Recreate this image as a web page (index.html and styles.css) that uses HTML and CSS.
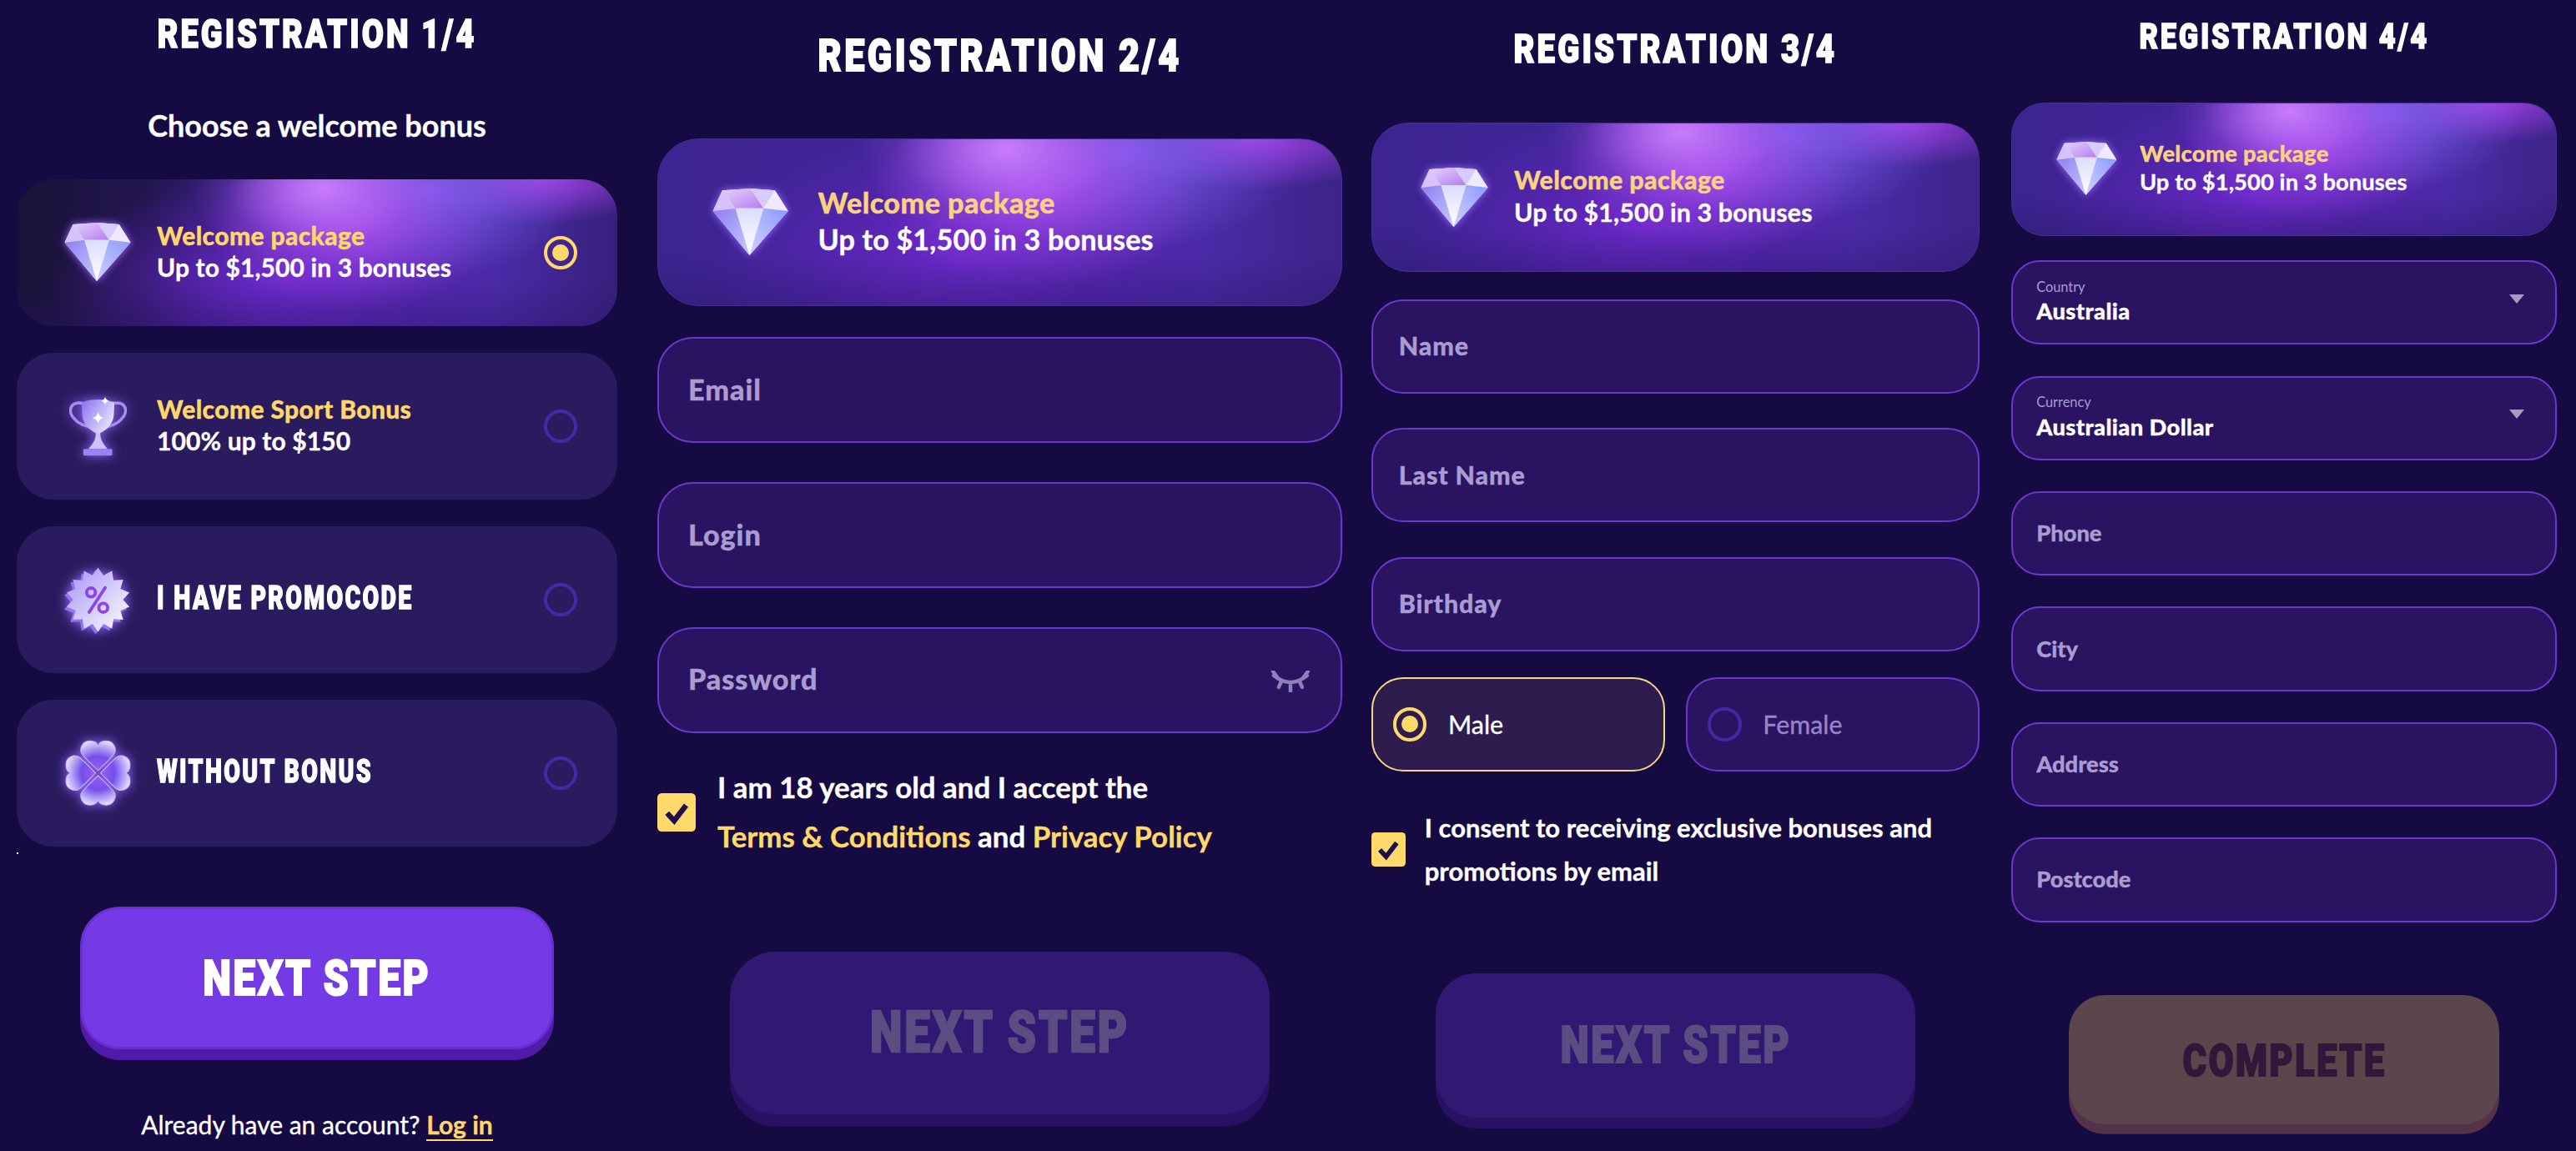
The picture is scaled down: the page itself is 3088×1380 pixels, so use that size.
FILE: index.html
```html
<!DOCTYPE html>
<html lang="en">
<head>
<meta charset="utf-8">
<title>Registration</title>
<link rel="stylesheet" href="styles.css">
</head>
<body>
<svg class="defs" width="0" height="0" aria-hidden="true">
  <defs>
    <linearGradient id="gLeft" x1="0" y1="0" x2="1" y2="1"><stop offset="0" stop-color="#8f7cf0"/><stop offset="1" stop-color="#c3cbff"/></linearGradient>
    <linearGradient id="gMid" x1="0" y1="0" x2="0" y2="1"><stop offset="0" stop-color="#dcdcff"/><stop offset="1" stop-color="#ffffff"/></linearGradient>
    <linearGradient id="gRight" x1="1" y1="0" x2="0" y2="1"><stop offset="0" stop-color="#8d98ff"/><stop offset="1" stop-color="#cfd2ff"/></linearGradient>
    <linearGradient id="gCrown" x1="0" y1="0" x2="1" y2="1"><stop offset="0" stop-color="#e4d4ff"/><stop offset="1" stop-color="#b67cf0"/></linearGradient>
    <linearGradient id="gCup" x1="0" y1="0" x2="1" y2="0.6"><stop offset="0" stop-color="#8a6eee"/><stop offset="1" stop-color="#e6e4ff"/></linearGradient>
    <linearGradient id="gBadge" x1="0" y1="0" x2="1" y2="1"><stop offset="0" stop-color="#a690f6"/><stop offset="0.55" stop-color="#d6d0fb"/><stop offset="1" stop-color="#ffffff"/></linearGradient>
    <radialGradient id="gLeaf" gradientUnits="userSpaceOnUse" cx="0" cy="0" r="40"><stop offset="0" stop-color="#a45ef0"/><stop offset="0.5" stop-color="#7450ec"/><stop offset="1" stop-color="#ece8ff"/></radialGradient>
    <path id="leaf" d="M0-3-18-21C-24-28-18-38-10-38-5-38-1-36 0-32 1-36 5-38 10-38 18-38 24-28 18-21Z"/>
  </defs>
</svg>

<main class="board">
  <span class="speck"></span>

  <section class="panel panel-one">
    <h1 class="title"><span class="squeeze">REGISTRATION 1/4</span></h1>
    <p class="lead">Choose a welcome bonus</p>
    <div class="card card-active">
      <span class="slot"><svg class="gem" viewBox="0 0 80 72"><polygon points="10,2 40,0 66,2 80,24 39,71 0,24" fill="#f0ecff"/><polygon points="10,2 24,21 0,24" fill="#d7c2fb"/><polygon points="10,2 40,0 54,21 24,21" fill="url(#gCrown)"/><polygon points="40,0 66,2 54,21" fill="#d6ccff"/><polygon points="66,2 80,24 54,21" fill="#efeaff"/><polygon points="0,24 24,21 39,71" fill="url(#gLeft)"/><polygon points="24,21 54,21 39,71" fill="url(#gMid)"/><polygon points="54,21 80,24 39,71" fill="url(#gRight)"/></svg></span>
      <div class="copy"><div class="gold">Welcome package</div><div class="white">Up to $1,500 in 3 bonuses</div></div>
      <span class="radio radio-on"></span>
    </div>
    <div class="card">
      <span class="slot"><svg class="cup" viewBox="95 100 210 225"><path d="M148 130C95 118 88 162 115 187 130 205 150 210 172 216M252 130C305 118 312 162 285 187 270 205 250 210 228 216" fill="none" stroke="#a68cf6" stroke-width="11"/><path d="M192 236C192 268 176 282 165 296H235C224 282 208 268 208 236Z" fill="#c9c2fb"/><rect x="146" y="296" width="106" height="24" rx="4" fill="#9a84f2"/><path d="M140 125Q200 105 260 125L258 170C255 210 225 232 200 241 175 232 145 210 142 170Z" fill="url(#gCup)"/><path d="M200 160Q203 178 220 182 203 186 200 204 197 186 180 182 197 178 200 160Z" fill="#fff"/><path d="M226 104Q228 117 240 120 228 123 226 136 224 123 212 120 224 117 226 104Z" fill="#fff"/></svg></span>
      <div class="copy"><div class="gold">Welcome Sport Bonus</div><div class="white">100% up to $150</div></div>
      <span class="radio"></span>
    </div>
    <div class="card">
      <span class="slot"><svg class="badge" viewBox="-42 -42 84 84"><polygon transform="translate(-3 3)" fill="#8f74ee" points="0,-40 6.9,-30.2 17.4,-36 19.3,-24.2 31.3,-24.9 27.9,-13.5 39,-8.9 31,0 39,8.9 27.9,13.5 31.3,24.9 19.3,24.2 17.4,36 6.9,30.2 0,40 -6.9,30.2 -17.4,36 -19.3,24.2 -31.3,24.9 -27.9,13.5 -39,8.9 -31,0 -39,-8.9 -27.9,-13.5 -31.3,-24.9 -19.3,-24.2 -17.4,-36 -6.9,-30.2"/><polygon fill="url(#gBadge)" points="0,-40 6.9,-30.2 17.4,-36 19.3,-24.2 31.3,-24.9 27.9,-13.5 39,-8.9 31,0 39,8.9 27.9,13.5 31.3,24.9 19.3,24.2 17.4,36 6.9,30.2 0,40 -6.9,30.2 -17.4,36 -19.3,24.2 -31.3,24.9 -27.9,13.5 -39,8.9 -31,0 -39,-8.9 -27.9,-13.5 -31.3,-24.9 -19.3,-24.2 -17.4,-36 -6.9,-30.2"/><g fill="none" stroke="#8b45e8" stroke-width="4"><circle cx="-8.7" cy="-9" r="5.5"/><circle cx="6.5" cy="10" r="5.5"/><path d="M9-15-11 15.5" stroke-linecap="round"/></g></svg></span>
      <div class="copy"><div class="heavy-label"><span class="squeeze-label">I HAVE PROMOCODE</span></div></div>
      <span class="radio"></span>
    </div>
    <div class="card">
      <span class="slot"><svg class="clover" viewBox="-40 -40 80 80"><g fill="url(#gLeaf)" stroke="#c9b6fb" stroke-width="1"><use href="#leaf"/><use href="#leaf" transform="rotate(90)"/><use href="#leaf" transform="rotate(180)"/><use href="#leaf" transform="rotate(270)"/></g></svg></span>
      <div class="copy"><div class="heavy-label"><span class="squeeze-label">WITHOUT BONUS</span></div></div>
      <span class="radio"></span>
    </div>
    <button class="step step-live"><span class="squeeze-step">NEXT STEP</span></button>
    <p class="signin">Already have an account? <a class="signin-link">Log in</a></p>
  </section>

  <section class="panel panel-two">
    <h1 class="title"><span class="squeeze">REGISTRATION 2/4</span></h1>
    <div class="banner">
      <span class="slot"><svg class="gem" viewBox="0 0 80 72"><polygon points="10,2 40,0 66,2 80,24 39,71 0,24" fill="#f0ecff"/><polygon points="10,2 24,21 0,24" fill="#d7c2fb"/><polygon points="10,2 40,0 54,21 24,21" fill="url(#gCrown)"/><polygon points="40,0 66,2 54,21" fill="#d6ccff"/><polygon points="66,2 80,24 54,21" fill="#efeaff"/><polygon points="0,24 24,21 39,71" fill="url(#gLeft)"/><polygon points="24,21 54,21 39,71" fill="url(#gMid)"/><polygon points="54,21 80,24 39,71" fill="url(#gRight)"/></svg></span>
      <div class="copy"><div class="gold gold-soft">Welcome package</div><div class="white">Up to $1,500 in 3 bonuses</div></div>
    </div>
    <div class="field">Email</div>
    <div class="field">Login</div>
    <div class="field field-eye">Password
      <svg class="eye" viewBox="0 0 48 26"><path d="M4 6Q24 22 44 6M3 1 9 9M45 1 39 9M13 13 10 20M35 13 38 20M24 16V25" fill="none" stroke="#8d7fbb" stroke-width="4.5" stroke-linecap="round"/></svg>
    </div>
    <div class="consent">
      <span class="tick"><svg class="tick-mark" viewBox="0 0 24 24"><path d="M4 12.5 10 19 20 6" fill="none" stroke="#1e0f4a" stroke-width="4.5"/></svg></span>
      <p class="consent-text">I am 18 years old and I accept the<br><a class="link">Terms &amp; Conditions</a> and <a class="link">Privacy Policy</a></p>
    </div>
    <button class="step step-off step-consent"><span class="squeeze-step">NEXT STEP</span></button>
  </section>

  <section class="panel panel-three">
    <h1 class="title"><span class="squeeze">REGISTRATION 3/4</span></h1>
    <div class="banner">
      <span class="slot"><svg class="gem" viewBox="0 0 80 72"><polygon points="10,2 40,0 66,2 80,24 39,71 0,24" fill="#f0ecff"/><polygon points="10,2 24,21 0,24" fill="#d7c2fb"/><polygon points="10,2 40,0 54,21 24,21" fill="url(#gCrown)"/><polygon points="40,0 66,2 54,21" fill="#d6ccff"/><polygon points="66,2 80,24 54,21" fill="#efeaff"/><polygon points="0,24 24,21 39,71" fill="url(#gLeft)"/><polygon points="24,21 54,21 39,71" fill="url(#gMid)"/><polygon points="54,21 80,24 39,71" fill="url(#gRight)"/></svg></span>
      <div class="copy"><div class="gold gold-soft">Welcome package</div><div class="white">Up to $1,500 in 3 bonuses</div></div>
    </div>
    <div class="field">Name</div>
    <div class="field">Last Name</div>
    <div class="field">Birthday</div>
    <div class="gender">
      <div class="choice choice-on"><span class="radio radio-on"></span><span>Male</span></div>
      <div class="choice"><span class="radio"></span><span>Female</span></div>
    </div>
    <div class="consent consent-tight">
      <span class="tick"><svg class="tick-mark" viewBox="0 0 24 24"><path d="M4 12.5 10 19 20 6" fill="none" stroke="#1e0f4a" stroke-width="4.5"/></svg></span>
      <p class="consent-text">I consent to receiving exclusive bonuses and<br>promotions by email</p>
    </div>
    <button class="step step-off step-consent"><span class="squeeze-step">NEXT STEP</span></button>
  </section>

  <section class="panel panel-four">
    <h1 class="title"><span class="squeeze">REGISTRATION 4/4</span></h1>
    <div class="banner">
      <span class="slot"><svg class="gem" viewBox="0 0 80 72"><polygon points="10,2 40,0 66,2 80,24 39,71 0,24" fill="#f0ecff"/><polygon points="10,2 24,21 0,24" fill="#d7c2fb"/><polygon points="10,2 40,0 54,21 24,21" fill="url(#gCrown)"/><polygon points="40,0 66,2 54,21" fill="#d6ccff"/><polygon points="66,2 80,24 54,21" fill="#efeaff"/><polygon points="0,24 24,21 39,71" fill="url(#gLeft)"/><polygon points="24,21 54,21 39,71" fill="url(#gMid)"/><polygon points="54,21 80,24 39,71" fill="url(#gRight)"/></svg></span>
      <div class="copy"><div class="gold gold-soft">Welcome package</div><div class="white">Up to $1,500 in 3 bonuses</div></div>
    </div>
    <div class="field field-select">
      <div class="select-copy"><div class="select-label">Country</div><div class="select-value">Australia</div></div>
      <span class="arrow"></span>
    </div>
    <div class="field field-select">
      <div class="select-copy"><div class="select-label">Currency</div><div class="select-value">Australian Dollar</div></div>
      <span class="arrow"></span>
    </div>
    <div class="field">Phone</div>
    <div class="field">City</div>
    <div class="field">Address</div>
    <div class="field">Postcode</div>
    <button class="step step-amber step-last"><span class="squeeze-step">COMPLETE</span></button>
  </section>
</main>
</body>
</html>
```

FILE: styles.css
```css
* { box-sizing: border-box; }
html, body { margin: 0; height: 100%; }
body {
  background: #150a42;
  color: #fff;
  font-family: "Lato", "Liberation Sans", sans-serif;
  font-weight: 700;
  overflow: hidden;
}
.defs { position: absolute; }
.board {
  position: relative;
  display: flex;
  align-items: flex-start;
  height: 1380px;
  padding-left: 20px;
}
.speck {
  position: absolute;
  left: 20px;
  top: 1022px;
  width: 2px;
  height: 2px;
  background: #fff;
}
.panel { width: 24em; flex: none; display: flex; flex-direction: column; -webkit-text-stroke: 0.35px currentColor; }
.panel-one { font-size: 30px; padding-top: 18px; }
.panel-two { font-size: 34.2px; margin-left: 48px; padding-top: 40px; }
.panel-three { font-size: 30.4px; margin-left: 35px; padding-top: 35px; }
.panel-four { font-size: 27.25px; margin-left: 38px; padding-top: 22px; }

.title, .heavy-label, .step {
  font-family: "Roboto", "Liberation Sans", sans-serif;
  font-weight: 900;
}
.title {
  margin: 0 0 1.34em;
  font-size: 1.58em;
  line-height: 1;
  letter-spacing: 0.08em;
  text-align: center;
  -webkit-text-stroke: 0.035em currentColor;
}
.panel-one .title { margin-bottom: 0; }
.squeeze, .squeeze-label, .squeeze-step { display: inline-block; }
.squeeze { transform: scaleX(0.8); }
.squeeze-label { transform: scaleX(0.75); transform-origin: left center; -webkit-text-stroke: 0.035em currentColor; }
.squeeze-step { transform: scaleX(0.8); -webkit-text-stroke: 0.035em currentColor; }
.lead {
  margin: 1.78em 0 1.17em;
  font-size: 1.2em;
  line-height: 1.2;
  text-align: center;
}

.card, .banner {
  display: flex;
  align-items: center;
  height: 5.87em;
  border-radius: 1.45em;
  padding-left: 1.9em;
  padding-right: 1.6em;
}
.card { background: #2a1a5e; margin-bottom: 1.067em; }
.card-active, .banner {
  background:
    linear-gradient(180deg, rgba(40,20,100,0) 70%, rgba(40,20,100,0.35) 100%),
    radial-gradient(ellipse 22% 55% at 51% 6%, #c87cfb 0%, rgba(190,110,248,0.6) 40%, rgba(175,95,242,0.18) 72%, rgba(170,90,240,0) 100%),
    radial-gradient(ellipse 24% 60% at 56% 30%, rgba(170,72,240,0.85) 0%, rgba(168,72,238,0.3) 60%, rgba(168,72,238,0) 100%),
    radial-gradient(ellipse 26% 60% at 68% 8%, rgba(122,98,238,0.95) 0%, rgba(124,99,238,0.35) 60%, rgba(126,100,238,0) 100%),
    radial-gradient(ellipse 22% 30% at 87% 0%, #a040e4 0%, rgba(160,64,228,0) 100%),
    radial-gradient(ellipse 38% 75% at 44% 72%, #6a28c8 0%, rgba(96,36,186,0.45) 60%, rgba(90,34,176,0) 100%),
    linear-gradient(90deg, #3c2490 0%, #43269c 45%, #4a2aa6 80%, #3d2488 100%);
}
.card-active {
  background:
    linear-gradient(180deg, rgba(40,20,100,0) 70%, rgba(40,20,100,0.35) 100%),
    radial-gradient(ellipse 22% 55% at 51% 6%, #c87cfb 0%, rgba(190,110,248,0.6) 40%, rgba(175,95,242,0.18) 72%, rgba(170,90,240,0) 100%),
    radial-gradient(ellipse 24% 60% at 56% 30%, rgba(170,72,240,0.85) 0%, rgba(168,72,238,0.3) 60%, rgba(168,72,238,0) 100%),
    radial-gradient(ellipse 26% 60% at 68% 8%, rgba(122,98,238,0.95) 0%, rgba(124,99,238,0.35) 60%, rgba(126,100,238,0) 100%),
    radial-gradient(ellipse 22% 30% at 87% 0%, #a040e4 0%, rgba(160,64,228,0) 100%),
    radial-gradient(ellipse 38% 75% at 44% 72%, #6a28c8 0%, rgba(96,36,186,0.45) 60%, rgba(90,34,176,0) 100%),
    linear-gradient(90deg, #1a1238 0%, #231650 22%, #45279f 45%, #4a2aa6 80%, #36207c 100%);
}
.banner {
  margin-bottom: 1.08em;
  border: 1px solid #45308f;
}
.slot {
  flex: none;
  width: 2.7em;
  margin-right: 1em;
  display: flex;
  justify-content: center;
  align-items: center;
}
.gem { display: block; filter: drop-shadow(0 0 5px #9a6bff); }
.cup, .badge, .clover { display: block; filter: drop-shadow(0 0 7px #9a6bff); }
.gem { width: 2.67em; height: 2.37em; }
.cup { width: 2.3em; height: 2.46em; }
.badge { width: 2.8em; height: 2.8em; }
.clover { width: 2.72em; height: 2.72em; }
.copy { flex: 1; line-height: 1.27; padding-bottom: 0.12em; }
.gold { color: #ffd76a; font-weight: 900; letter-spacing: 0.012em; }
.gold-soft { color: #fbd27e; }
.white { color: #fff; letter-spacing: 0.004em; }
.heavy-label { font-size: 1.27em; letter-spacing: 0.08em; line-height: 1; }

.radio {
  flex: none;
  display: inline-flex;
  align-items: center;
  justify-content: center;
  width: 1.33em;
  height: 1.33em;
  border: 0.16em solid #4a27a2;
  border-radius: 50%;
}
.radio-on { border-color: #ffd96a; }
.radio-on::after {
  content: "";
  width: 0.66em;
  height: 0.66em;
  border-radius: 50%;
  background: #ffd96a;
}

.step {
  display: block;
  align-self: center;
  width: 18.94em;
  height: 5.7em;
  padding: 0;
  border-radius: 1.6em;
  font-size: 1em;
  letter-spacing: 0.105em;
}
.squeeze-step { font-size: 2em; }
.step-live {
  margin-top: 1.33em;
  background: #733ae6;
  border: 0.13em solid #6a2fd0;
  box-shadow: 0 0.43em 0 #4f1ba8;
  color: #fff;
}
.step-off {
  background: #311872;
  border: 0;
  box-shadow: 0 0.43em 0 #281062;
  color: #5b4d82;
}
.step-amber {
  background: #5b464c;
  border: 0;
  box-shadow: 0 0.43em 0 #53324a;
  color: #32173a;
}
.step-consent { margin-top: 3.18em; }
.step-last { margin-top: 1.85em; }
.signin {
  margin: 2.4em 0 0;
  text-align: center;
  font-weight: 400;
  font-size: 1em;
  line-height: 1.2;
}
.signin-link {
  color: #ffd76a;
  font-weight: 700;
  border-bottom: 2px solid #ffd76a;
}

.field {
  display: flex;
  align-items: center;
  height: 3.72em;
  margin-bottom: 1.36em;
  padding: 0 1.02em 0.07em;
  border: 2px solid #6c38cc;
  border-radius: 1.25em;
  background: #2a1361;
  color: #a99cd0;
  font-weight: 900;
  letter-spacing: 0.028em;
}
.panel-four .field { letter-spacing: 0; }
.field-eye { justify-content: space-between; padding-right: 1.05em; }
.eye { width: 1.4em; height: 0.76em; margin-top: 0.2em; }
.field-select { justify-content: space-between; }
.select-copy { line-height: 1.15; }
.select-label { color: #a99cd0; font-size: 0.6em; font-weight: 400; -webkit-text-stroke: 0; }
.select-value { color: #fff; font-size: 1em; font-weight: 900; margin-top: 0.14em; }
.panel-four .select-value { letter-spacing: 0.016em; }
.arrow {
  width: 0;
  height: 0;
  margin-right: 0.37em;
  margin-top: -0.25em;
  border-left: 0.35em solid transparent;
  border-right: 0.35em solid transparent;
  border-top: 0.44em solid #a79cc0;
}

.gender { display: flex; gap: 0.82em; margin-top: -0.33em; }
.choice {
  flex: 1;
  display: flex;
  align-items: center;
  gap: 0.85em;
  height: 3.72em;
  padding-left: 0.79em;
  border: 2px solid #6c38cc;
  border-radius: 1.25em;
  background: #2a1361;
  color: #9685c8;
  font-weight: 400;
}
.choice-on { background: #2f1c4e; border-color: #f5d682; color: #fff; }

.consent { display: flex; align-items: center; gap: 0.76em; margin-top: -0.3em; }
.consent-tight { margin-top: 1.35em; }
.tick {
  flex: none;
  width: 1.345em;
  height: 1.345em;
  border-radius: 0.15em;
  background: #ffd96a;
  display: flex;
  align-items: center;
  justify-content: center;
}
.tick-mark { width: 1em; height: 1em; }
.consent-text { margin: 0; line-height: 1.68; font-size: 1.02em; font-weight: 700; }
.link { color: #ffd96a; }
```
